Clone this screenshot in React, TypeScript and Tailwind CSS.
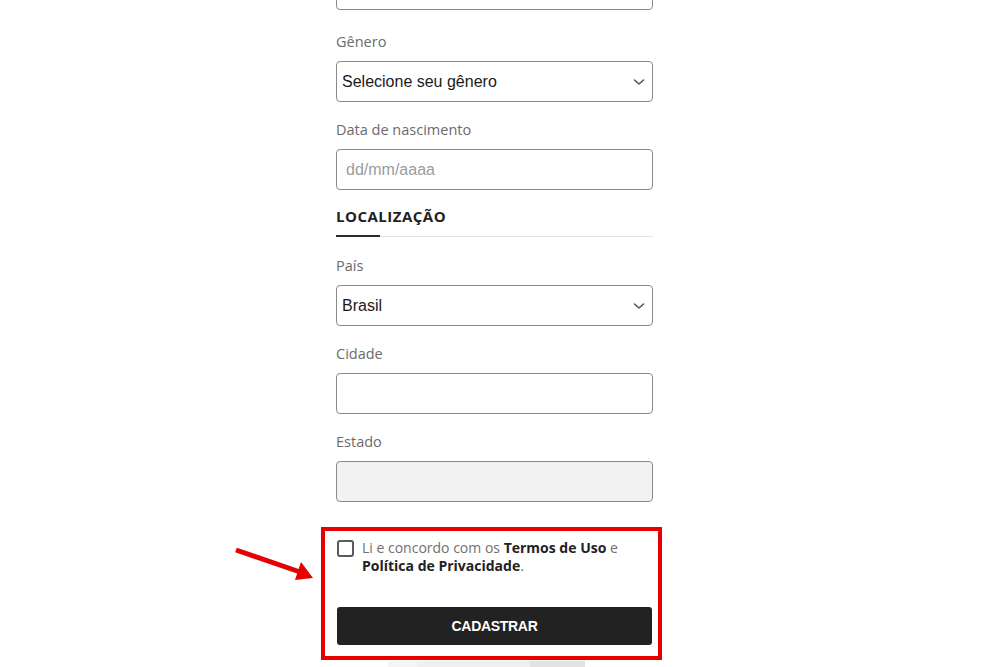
import type { ReactNode } from 'react';

const labelCls = 'block h-5 leading-5 text-[14.5px] text-[#6b6b6b]';
const boxCls =
  'block w-full h-[41px] rounded-[4px] border-[1.5px] border-[#8a8a8a] outline-none';
const arialCls = "font-['Liberation_Sans',Arial,sans-serif]";

function Chevron() {
  return (
    <svg
      className="pointer-events-none absolute right-[8px] top-1/2 -translate-y-1/2"
      width="12"
      height="8"
      viewBox="0 0 12 8"
      fill="none"
    >
      <path d="M1.5 2l4.5 4 4.5-4" stroke="#555" strokeWidth="1.6" strokeLinecap="round" strokeLinejoin="round" />
    </svg>
  );
}

function Field({ label, className, children }: { label: string; className?: string; children: ReactNode }) {
  return (
    <div className={className}>
      <label className={labelCls}>{label}</label>
      <div className="mt-[9px]">{children}</div>
    </div>
  );
}

function SelectBox({ value }: { value: string }) {
  return (
    <div className="relative">
      <select
        defaultValue={value}
        className={`${boxCls} ${arialCls} appearance-none bg-white pl-[5px] pr-8 text-[16px] text-[#1a1a1a]`}
      >
        <option>{value}</option>
      </select>
      <Chevron />
    </div>
  );
}

export default function App() {
  return (
    <div className="relative h-[667px] overflow-hidden bg-white font-['Open_Sans',sans-serif]">
      <div className="ml-[336px] w-[317px]">
        {/* field above, scrolled out of view */}
        <div className={`${boxCls} -mt-[31px] bg-white`} />

        <Field label="Gênero" className="mt-[22px]">
          <SelectBox value="Selecione seu gênero" />
        </Field>

        <Field label="Data de nascimento" className="mt-[18px]">
          <input
            placeholder="dd/mm/aaaa"
            className={`${boxCls} ${arialCls} bg-white px-[9px] text-[16px] placeholder:text-[#9c9c9c]`}
          />
        </Field>

        {/* Localização */}
        <h2 className="mt-[16px] h-5 leading-5 text-[15px] font-bold tracking-[0.5px] text-[#222]">
          LOCALIZAÇÃO
        </h2>
        <div className="mt-[9px] flex h-[2px] items-center">
          <div className="h-[2px] w-[44px] bg-[#2a2a2a]" />
          <div className="h-px flex-1 bg-[#e3e3e3]" />
        </div>

        <Field label="País" className="mt-[19px]">
          <SelectBox value="Brasil" />
        </Field>

        <Field label="Cidade" className="mt-[18px]">
          <input className={`${boxCls} ${arialCls} bg-white px-[9px] text-[16px]`} />
        </Field>

        <Field label="Estado" className="mt-[18px]">
          <input disabled className={`${boxCls} ${arialCls} bg-[#f2f2f2] px-[9px] text-[16px]`} />
        </Field>

        {/* highlighted area */}
        <div className="mt-[25px] -ml-[15px] -mr-[9px] border-4 border-[#e60000] pb-[11px] pl-[12px] pr-[6px] pt-[8px]">
          <div className="flex items-start gap-[8px]">
            <span className="mt-px h-[17px] w-[17px] shrink-0 rounded-[3px] border-2 border-[#5a5a5a]" />
            <p className="text-[14px] leading-[17.5px] text-[#707070]">
              Li e concordo com os <b className="font-bold text-[#222]">Termos de Uso</b> e{' '}
              <b className="font-bold text-[#222]">Política de Privacidade</b>.
            </p>
          </div>
          <button
            className={`${arialCls} mt-[33px] flex h-[38px] w-[315px] items-center justify-center rounded-[3px] bg-[#222] text-[14px] font-bold tracking-[-0.3px] text-white`}
          >
            CADASTRAR
          </button>
        </div>

        <div className="mt-px ml-[52px] flex h-[10px]">
          <div className="w-[29px] bg-[#f5f5f5]" />
          <div className="w-[113px] bg-[#f0f0f0]" />
          <div className="w-[55px] bg-[#e3e3e3]" />
        </div>
      </div>

      {/* annotation arrow */}
      <svg className="absolute left-[230px] top-[540px]" width="90" height="50" viewBox="0 0 90 50">
        <line x1="6" y1="10" x2="70" y2="32" stroke="#e60000" strokeWidth="5" />
        <polygon points="83,38 71,22 65,40" fill="#e60000" />
      </svg>
    </div>
  );
}
